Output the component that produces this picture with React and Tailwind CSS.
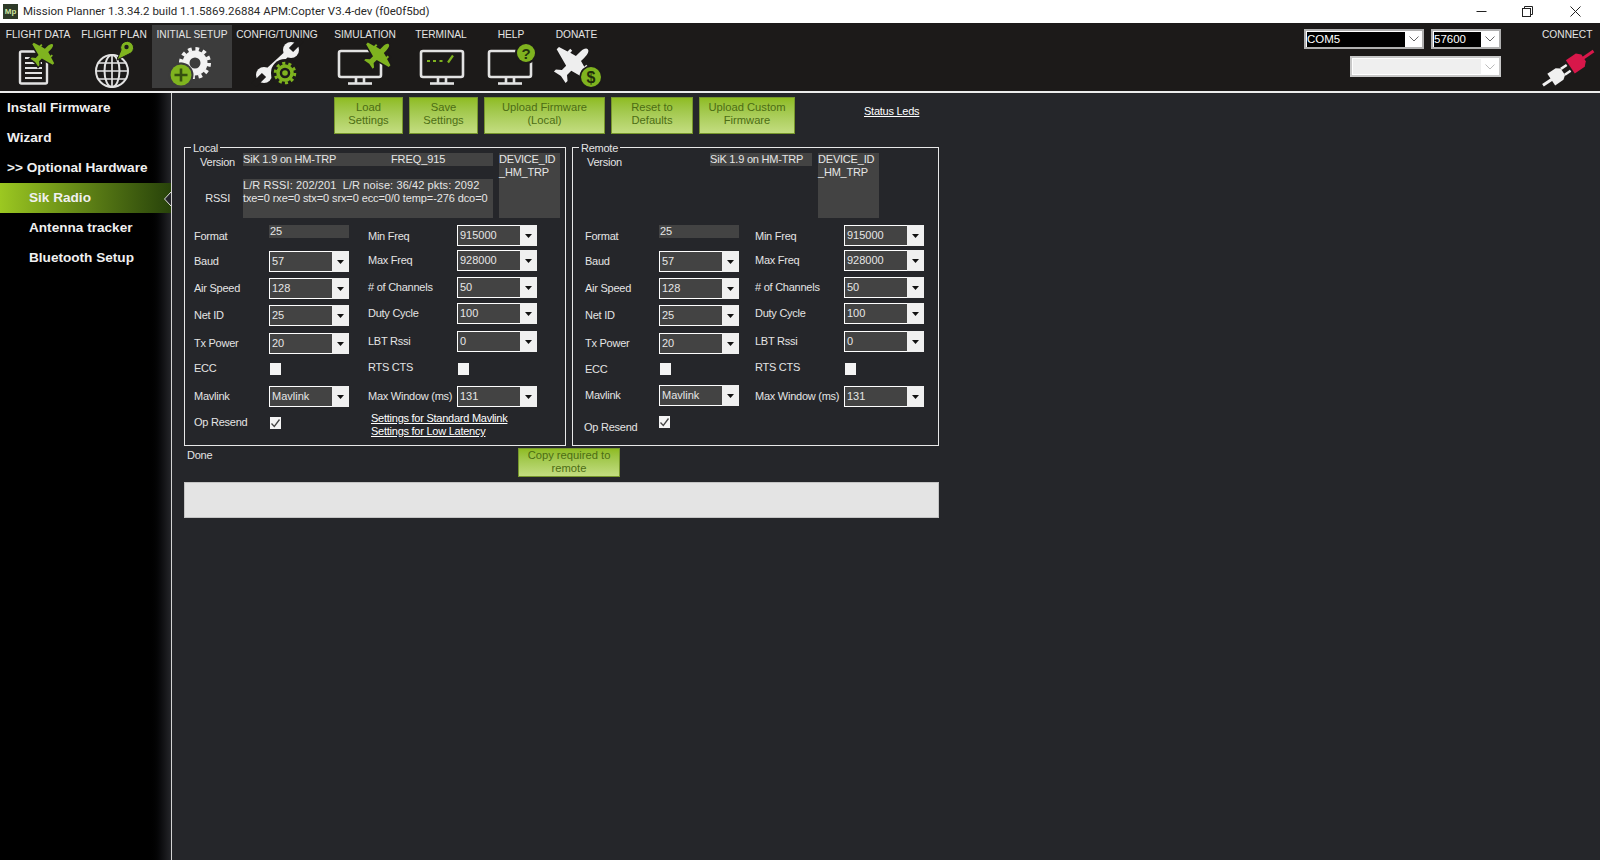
import React from "react";

const PLANE = "M0,-19 C2,-19 3.300,-16 3.300,-11 L3.300,-7 L9,-5.500 L9,-8 L11.5,-8 L11.5,-4.500 L20,-2 L20,1 L3.300,5.500 L3.300,11 L7.500,14.500 L7.500,17 L0,15.500 L-7.500,17 L-7.500,14.500 L-3.300,11 L-3.300,5.500 L-20,1 L-20,-2 L-11.5,-4.500 L-11.5,-8 L-9,-8 L-9,-5.500 L-3.300,-7 L-3.300,-11 C-3.300,-16 -2,-19 0,-19 Z";

function Plane({ x, y, s, fill, halo }) {
  return (
    <g transform={`translate(${x} ${y}) rotate(45) scale(${s})`}>
      {halo && <path d={PLANE} fill={halo} stroke={halo} strokeWidth={3 / s} />}
      <path d={PLANE} fill={fill} />
    </g>
  );
}

function Monitor({ x, w }) {
  const c = x + w / 2;
  return (
    <g fill="none" stroke="#e2e2e2" strokeWidth="2.6" strokeLinejoin="round">
      <rect x={x} y="51" width={w} height="26" rx="2" />
      <path d={`M${c - 4} 78 V83 M${c + 4} 78 V83`} />
      <path d={`M${c - 12} 83.5 H${c + 12}`} />
    </g>
  );
}

function Gear({ x, y, r, ring, teeth, color, count }) {
  const tr = r + ring / 2 + teeth / 2 - 0.5;
  const c = 2 * Math.PI * tr;
  return (
    <g fill="none" stroke={color}>
      <circle cx={x} cy={y} r={r} strokeWidth={ring} />
      <circle cx={x} cy={y} r={tr} strokeWidth={teeth} strokeDasharray={`${c / count / 2} ${c / count / 2}`} />
    </g>
  );
}

const GREEN = "#7fb31f";
const DARK = "#1c1a19";

const NAV = [
  { label: "FLIGHT DATA", left: 0, w: 76, icon: (
    <>
      <rect x="20" y="51.5" width="27" height="32" rx="1.5" fill="none" stroke="#e2e2e2" strokeWidth="2.4" />
      <path d="M25 58H42M25 63H42M25 68H42M25 73H42M25 78H42" stroke="#e2e2e2" strokeWidth="1.8" />
      <Plane x={43} y={54} s={0.72} fill={GREEN} halo={DARK} />
    </>
  ) },
  { label: "FLIGHT PLAN", left: 76, w: 76, icon: (
    <>
      <g fill="none" stroke="#e2e2e2" strokeWidth="2">
        <circle cx="112" cy="71" r="16" />
        <ellipse cx="112" cy="71" rx="7.5" ry="16" />
        <path d="M112 55V87M96 71H128M98 63H126M98 79H126" strokeWidth="1.7" />
      </g>
      <path d="M117 60 L121 50 A6.5 6.5 0 1 1 129 54 Z" fill={GREEN} stroke={DARK} strokeWidth="1" />
      <circle cx="126.5" cy="47" r="2.2" fill={DARK} />
    </>
  ) },
  { label: "INITIAL SETUP", left: 152, w: 80, active: true, icon: (
    <>
      <Gear x={195} y={63} r={9} ring={7} teeth={4} color="#f2f2f2" count={12} />
      <circle cx="181" cy="75" r="12.5" fill="#3c3c3c" />
      <circle cx="181" cy="75" r="10.5" fill={GREEN} />
      <path d="M174.5 75H187.5M181 68.5V81.5" stroke="#355010" strokeWidth="2.6" />
    </>
  ) },
  { label: "CONFIG/TUNING", left: 232, w: 90, icon: (
    <>
      <path d="M265 74 L289 52" stroke="#f0f0f0" strokeWidth="6" />
      <circle cx="291" cy="50" r="8" fill="#f0f0f0" />
      <path d="M291 50 L301 40" stroke={DARK} strokeWidth="6" />
      <circle cx="264" cy="75" r="8" fill="#f0f0f0" />
      <path d="M264 75 L254 85" stroke={DARK} strokeWidth="6" />
      <circle cx="285" cy="73" r="14" fill={DARK} />
      <Gear x={285} y={73} r={7} ring={3.5} teeth={3} color={GREEN} count={10} />
      <circle cx="285" cy="73" r="2.8" fill={GREEN} />
    </>
  ) },
  { label: "SIMULATION", left: 322, w: 86, icon: (
    <>
      <Monitor x={339} w={42} />
      <Plane x={378} y={55} s={0.8} fill={GREEN} halo={DARK} />
    </>
  ) },
  { label: "TERMINAL", left: 408, w: 66, icon: (
    <>
      <Monitor x={421} w={42} />
      <path d="M427 61H430M433 61H436M439.500 61H442.500" stroke={GREEN} strokeWidth="2" />
      <path d="M448 62.500L453 55.500" stroke={GREEN} strokeWidth="2.200" />
    </>
  ) },
  { label: "HELP", left: 474, w: 74, icon: (
    <>
      <Monitor x={489} w={42} />
      <circle cx="526" cy="53" r="11" fill={DARK} />
      <circle cx="526" cy="53" r="9" fill={GREEN} />
      <text x="526" y="58.500" textAnchor="middle" fontSize="15" fontWeight="700" fontFamily="Liberation Sans, sans-serif" fill="#24330c">?</text>
    </>
  ) },
  { label: "DONATE", left: 548, w: 57, icon: (
    <>
      <Plane x={573} y={64} s={1.1} fill="#eeeeee" />
      <circle cx="591" cy="77" r="11.500" fill={DARK} />
      <circle cx="591" cy="77" r="10" fill={GREEN} />
      <text x="591" y="83" textAnchor="middle" fontSize="16" fontWeight="700" fontFamily="Liberation Sans, sans-serif" fill="#1f2c0a">$</text>
    </>
  ) },
];

function Caret() {
  return (
    <svg width="7" height="4" viewBox="0 0 7 4" className="block">
      <path d="M0 0H7L3.500 4Z" fill="#111" />
    </svg>
  );
}

function Combo({ value, className = "" }) {
  return (
    <div className={"flex h-[21px] w-[80px] shrink-0 border border-white bg-[#434343] " + className}>
      <span className="flex-1 px-[2px] text-[11px] leading-[19px] tracking-normal text-[#e6e6e6]">{value}</span>
      <span className="-my-px -mr-px flex w-[17px] items-center justify-center bg-[#f0f0f0]">
        <Caret />
      </span>
    </div>
  );
}

function Check({ checked }) {
  return (
    <div className="h-[12px] w-[11px] shrink-0 bg-[#f4f4f4]">
      {checked && (
        <svg width="11" height="12" viewBox="0 0 11 12" className="block">
          <path d="M1.500 6.500L4.300 9.500L9.500 2.500" fill="none" stroke="#444" strokeWidth="1.300" />
        </svg>
      )}
    </div>
  );
}

function Row({ label, w, className = "", labelClass = "", children }) {
  return (
    <div className={"flex h-[21px] items-center " + className}>
      <span className={"shrink-0 whitespace-nowrap " + w + " " + labelClass}>{label}</span>
      {children}
    </div>
  );
}

function FormA({ w, opCls = "", ecCls = "", mavCls = "mt-[7px]" }) {
  return (
    <div className="w-[155px] shrink-0">
      <div className="flex h-[21px] items-start">
        <span className={"self-center pt-[2px] " + w}>Format</span>
        <div className="h-[13px] w-[80px] bg-[#434343] pl-[1px] text-[11px] leading-[13px] tracking-normal text-[#e6e6e6]">25</div>
      </div>
      <Row w={w} label="Baud" className="mt-[5px]"><Combo value="57" /></Row>
      <Row w={w} label="Air Speed" className="mt-[6px]"><Combo value="128" /></Row>
      <Row w={w} label="Net ID" className="mt-[6px]"><Combo value="25" /></Row>
      <Row w={w} label="Tx Power" className="mt-[7px]"><Combo value="20" /></Row>
      <Row w={w} label="ECC" className="mt-[4px]" labelClass={ecCls}><div className="ml-px"><Check /></div></Row>
      <Row w={w} label="Mavlink" className={mavCls}><Combo value="Mavlink" /></Row>
      <Row w={w} label="Op Resend" className="mt-[5px]" labelClass={opCls}><div className="ml-px"><Check checked /></div></Row>
    </div>
  );
}

function FormB({ children }) {
  const w = "w-[89px]";
  return (
    <div className="w-[169px] shrink-0">
      <Row w={w} label="Min Freq" labelClass="pt-[2px]"><Combo value="915000" /></Row>
      <Row w={w} label="Max Freq" className="mt-[4px]"><Combo value="928000" /></Row>
      <Row w={w} label="# of Channels" className="mt-[6px]"><Combo value="50" /></Row>
      <Row w={w} label="Duty Cycle" className="mt-[5px]"><Combo value="100" /></Row>
      <Row w={w} label="LBT Rssi" className="mt-[7px]"><Combo value="0" /></Row>
      <Row w={w} label="RTS CTS" className="mt-[6px]" labelClass="-mt-[3px]"><div className="ml-px mt-[1px]"><Check /></div></Row>
      <Row w={w} label="Max Window (ms)" className="mt-[7px]"><Combo value="131" /></Row>
      {children}
    </div>
  );
}

function GreenButton({ className = "", children }) {
  return (
    <button className={"shrink-0 border border-[#76962c] bg-gradient-to-b from-[#8fbc20] to-[#c3dd80] text-center text-[11.2px] leading-[13px] tracking-normal text-[#4c6d14] " + className}>
      {children}
    </button>
  );
}

function Device() {
  return (
    <div className="h-[65px] w-[61px] shrink-0 bg-[#434343] text-[11px] leading-[13px] tracking-[-0.2px] text-[#e6e6e6]">
      DEVICE_ID<br />_HM_TRP
    </div>
  );
}

function Legend({ children }) {
  return <span className="absolute -top-[6px] left-[6px] bg-[#25262a] px-[2px] leading-[13px]">{children}</span>;
}

function Chevron({ stroke }) {
  return (
    <svg className="mx-auto" width="10" height="6" viewBox="0 0 10 6" fill="none" stroke={stroke}>
      <path d="M0.500 0.500L5 5L9.500 0.500" />
    </svg>
  );
}

const SIDE = [
  ["Install Firmware", "pl-[7px]"],
  ["Wizard", "pl-[7px]"],
  [">> Optional Hardware", "pl-[7px]"],
  ["Sik Radio", "pl-[29px]", true],
  ["Antenna tracker", "pl-[29px]"],
  ["Bluetooth Setup", "pl-[29px]"],
];

const TOP_BTN = "h-[37px] pb-[3px]";

export default function App() {
  return (
    <div className="flex h-[860px] w-[1600px] flex-col overflow-hidden bg-[#25262a] text-[11px] leading-[13px] tracking-[-0.25px] text-[#e4e4e4] [font-family:'Liberation_Sans',Arial,sans-serif]">
      {/* title bar */}
      <div className="flex h-[23px] shrink-0 items-center bg-white tracking-normal text-[#2a2a2a]">
        <div className="ml-[3px] flex h-[15px] w-[15px] items-center justify-center bg-[#2e3a28] text-[8px] font-bold text-[#cfe8a0]">Mp</div>
        <span className="ml-[5px] text-[11.5px] [font-family:Roboto,sans-serif]">Mission Planner 1.3.34.2 build 1.1.5869.26884 APM:Copter V3.4-dev (f0e0f5bd)</span>
        <div className="ml-auto flex h-full items-center">
          <div className="flex h-full w-[46px] items-center justify-center">
            <svg width="11" height="11" viewBox="0 0 11 11"><path d="M0.500 5.500H10.500" stroke="#222" /></svg>
          </div>
          <div className="flex h-full w-[46px] items-center justify-center">
            <svg width="11" height="11" viewBox="0 0 11 11" fill="none" stroke="#222"><rect x="0.500" y="2.500" width="8" height="8" /><path d="M2.500 2.500V0.500H10.500V8.500H8.500" /></svg>
          </div>
          <div className="flex h-full w-[50px] items-center justify-center">
            <svg width="11" height="11" viewBox="0 0 11 11" stroke="#222"><path d="M0.500 0.500L10.500 10.500M10.500 0.500L0.500 10.500" /></svg>
          </div>
        </div>
      </div>

      {/* toolbar */}
      <div className="flex h-[70px] shrink-0 border-b-2 border-[#ececec] bg-[#1c1a19] tracking-normal">
        {NAV.map((n) => (
          <div key={n.label} className="flex h-[65px] flex-col" style={{ width: n.w }}>
            <div className={n.active ? "mt-[2px] h-[63px] bg-[#3c3c3c]" : "mt-[2px] h-[63px]"}>
              <div className="h-[15px] pt-[3px] text-center text-[10.2px] leading-[14px] whitespace-nowrap text-[#e4e4e4]">{n.label}</div>
              <svg width={n.w} height="48" viewBox={`${n.left} 40 ${n.w} 48`} className="block">{n.icon}</svg>
            </div>
          </div>
        ))}
        <div className="ml-auto flex">
          <div className="mr-[41px] flex flex-col items-end">
            <div className="mt-[6px] flex gap-[7px]">
              <div className="flex h-[20px] w-[120px] items-center border-2 border-[#b0b0b0] bg-white">
                <span className="ml-px h-[15px] w-[98px] bg-black text-[11.5px] leading-[15px] text-white">COM5</span>
                <Chevron stroke="#666" />
              </div>
              <div className="flex h-[20px] w-[70px] items-center border-2 border-[#b0b0b0] bg-white">
                <span className="ml-px h-[15px] w-[47px] bg-black text-[11.5px] leading-[15px] text-white">57600</span>
                <Chevron stroke="#666" />
              </div>
            </div>
            <div className="mt-[7px] flex h-[21px] w-[151px] items-center border-2 border-[#c8c8c8] bg-white">
              <span className="ml-px h-[15px] w-[128px] bg-[#efefef]" />
              <Chevron stroke="#bbb" />
            </div>
          </div>
          <div className="flex w-[58px] flex-col">
            <div className="mt-[5px] h-[15px] whitespace-nowrap pr-[10px] text-right text-[10.2px] leading-[14px] text-[#e4e4e4]">CONNECT</div>
            <svg width="58" height="48" viewBox="1542 40 58 48" className="block">
              <g transform="translate(1567 66) rotate(-34)">
                <path d="M-29 0H-15" stroke="#f0f0f0" strokeWidth="3" />
                <path d="M-19 -7 H-9 L-5 -4 V4 L-9 7 H-19 Z" fill="#f0f0f0" />
                <path d="M-5 -3.500H2M-5 3.500H2" stroke="#f0f0f0" strokeWidth="2.500" />
                <path d="M4 -8 H16 L20 -4 V4 L16 8 H4 Z" fill="#d8174a" />
                <path d="M18 0H32" stroke="#d8174a" strokeWidth="3" />
              </g>
            </svg>
          </div>
        </div>
      </div>

      <div className="flex min-h-0 flex-1">
        {/* sidebar */}
        <aside className="relative w-[172px] shrink-0 border-r border-[#d4d4d4] bg-gradient-to-r from-black from-[86%] to-[#25262a] tracking-normal">
          {SIDE.map(([t, pad, active]) => (
            <div
              key={t}
              className={
                "flex h-[30px] items-center pb-[2px] text-[13.6px] font-bold text-[#f0f0f0] " + pad + " " +
                (active ? "bg-gradient-to-r from-[#9cc821] to-[#28430a]" : "")
              }
            >
              {t}
            </div>
          ))}
          <svg width="7" height="14" viewBox="0 0 7 14" className="absolute left-[164px] top-[99px]">
            <path d="M7 0L0.500 7L7 14Z" fill="#25262a" />
            <path d="M7 0L0.500 7L7 14" fill="none" stroke="#e0e0e0" strokeWidth="1" />
          </svg>
        </aside>

        {/* content */}
        <main className="min-w-0 flex-1 pl-[12px] pt-[4px]">
          <div className="ml-[150px] flex gap-[6px]">
            <GreenButton className={TOP_BTN + " w-[69px]"}>Load<br />Settings</GreenButton>
            <GreenButton className={TOP_BTN + " w-[69px]"}>Save<br />Settings</GreenButton>
            <GreenButton className={TOP_BTN + " w-[121px]"}>Upload Firmware<br />(Local)</GreenButton>
            <GreenButton className={TOP_BTN + " w-[82px]"}>Reset to<br />Defaults</GreenButton>
            <GreenButton className={TOP_BTN + " w-[96px]"}>Upload Custom<br />Firmware</GreenButton>
            <a className="ml-[63px] mt-[7px] leading-[14px] text-white underline">Status Leds</a>
          </div>

          <div className="mt-[13px] flex w-[755px] gap-[6px]">
            {/* Local */}
            <section className="relative h-[299px] w-[382px] shrink-0 border border-[#e8e8e8] pt-[5px]">
              <Legend>Local</Legend>
              <div className="flex h-[65px] pl-[6px]">
                <div className="w-[308px] shrink-0">
                  <div className="flex h-[13px]">
                    <span className="w-[44px] pt-[3px] text-right">Version</span>
                    <div className="ml-[8px] flex h-[13px] w-[250px] bg-[#434343] text-[#e6e6e6]">
                      <span className="w-[148px] tracking-[-0.2px]">SiK 1.9 on HM-TRP</span>
                      <span className="tracking-[-0.1px]">FREQ_915</span>
                    </div>
                  </div>
                  <div className="mt-[13px] flex h-[39px]">
                    <span className="w-[39px] pt-[13px] text-right">RSSI</span>
                    <div className="ml-[13px] h-[39px] w-[250px] whitespace-nowrap bg-[#434343] tracking-[0.1px] text-[#e6e6e6]">
                      L/R RSSI: 202/201&nbsp; L/R noise: 36/42 pkts: 2092<br />
                      <span className="tracking-[-0.1px]">txe=0 rxe=0 stx=0 srx=0 ecc=0/0 temp=-276 dco=0</span>
                    </div>
                  </div>
                </div>
                <Device />
              </div>
              <div className="mt-[7px] flex gap-[19px] pl-[9px]">
                <FormA w="w-[75px]" />
                <FormB>
                  <div className="mt-[5px] pl-[3px] tracking-[-0.25px] text-white underline">
                    <div>Settings for Standard Mavlink</div>
                    <div>Settings for Low Latency</div>
                  </div>
                </FormB>
              </div>
            </section>

            {/* Remote */}
            <section className="relative h-[299px] w-[367px] shrink-0 border border-[#e8e8e8] pt-[5px]">
              <Legend>Remote</Legend>
              <div className="flex h-[65px] pl-[14px]">
                <span className="w-[123px] pt-[3px]">Version</span>
                <div className="h-[13px] w-[102px] whitespace-nowrap bg-[#434343] tracking-[-0.2px] text-[#e6e6e6]">SiK 1.9 on HM-TRP</div>
                <div className="ml-[6px]"><Device /></div>
              </div>
              <div className="mt-[7px] flex gap-[15px] pl-[12px]">
                <FormA w="w-[74px]" mavCls="mt-[6px]" opCls="pt-[11px] -ml-px" ecCls="pt-[2px]" />
                <FormB />
              </div>
            </section>
          </div>

          <div className="mt-[2px] flex h-[29px] w-[755px]">
            <span className="ml-[3px] w-[331px] pt-[1px]">Done</span>
            <GreenButton className="h-[29px] w-[102px] pb-[2px]">Copy required to<br />remote</GreenButton>
          </div>

          <div className="mt-[5px] h-[36px] w-[755px] border border-[#c4c4c4] bg-[#e4e4e4]" />
        </main>
      </div>
    </div>
  );
}
